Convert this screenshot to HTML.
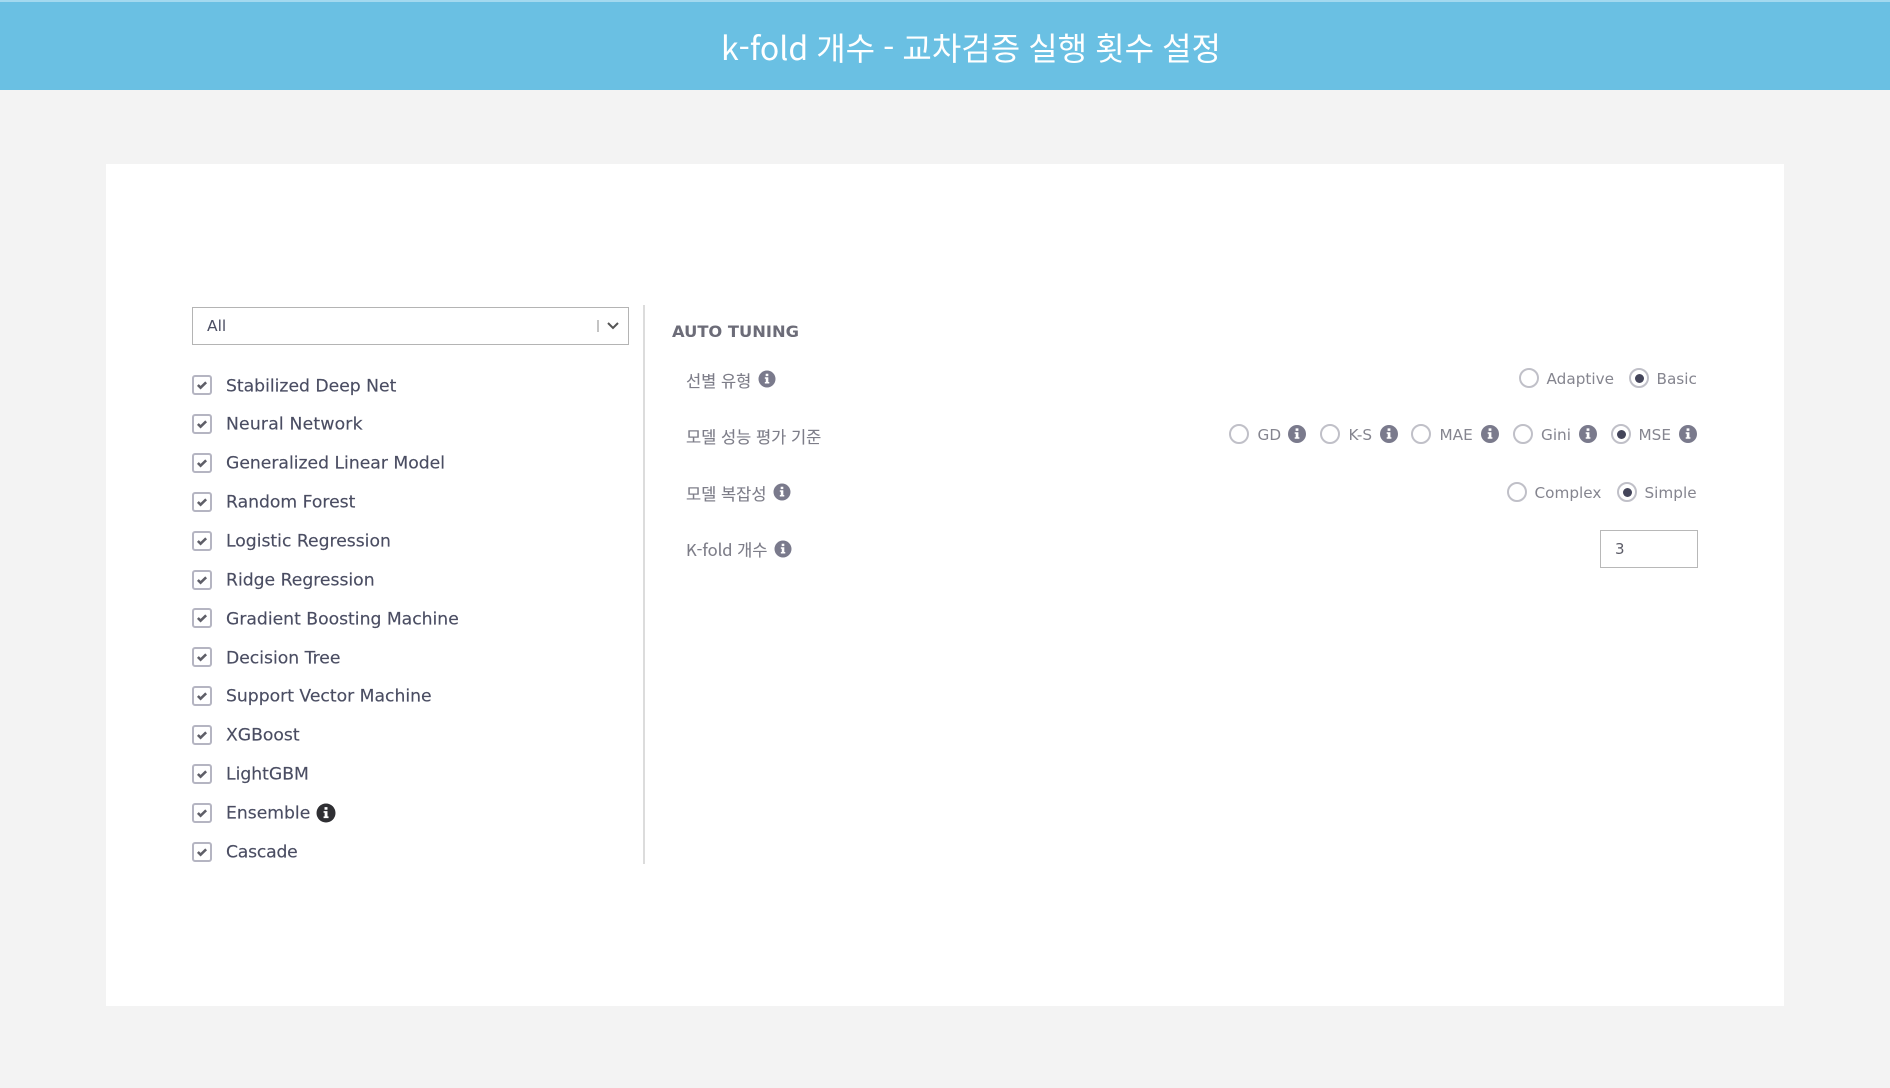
<!DOCTYPE html>
<html lang="ko">
<head>
<meta charset="utf-8">
<title>k-fold 개수</title>
<style>
html,body{margin:0;padding:0;width:1890px;height:1088px;overflow:hidden;background:#f3f3f3}
body{position:relative;font-family:"DejaVu Sans","Noto Sans CJK KR",sans-serif}
.hd{position:absolute;left:0;top:0;width:1890px;height:90px;background:#6ac0e3;border-top:2px solid #a3d9ef;box-sizing:border-box}
.title{position:absolute;left:0;top:47px;transform:translateY(-50%);text-align:center;color:#fff;font:400 32px/44px "Noto Sans CJK KR",sans-serif;white-space:nowrap;padding-left:81px;width:1780px;word-spacing:-.9px;filter:blur(.3px)}
.card{position:absolute;left:106px;top:164px;width:1678px;height:842px;background:#fff}
.sel{position:absolute;left:192px;top:307px;width:437px;height:38px;border:1.5px solid #b4b4b4;box-sizing:border-box}
.div{position:absolute;left:643px;top:305px;width:1.5px;height:559px;background:#dcdcdc}
.t{position:absolute;transform:translateY(-50%);white-space:nowrap;line-height:24px;filter:blur(.3px)}
.l{left:226px;font-size:17.2px;color:#4a4d62;transform:translateY(calc(-50% + .5px));-webkit-text-stroke:.15px #4a4d62}
.g{font-size:15.25px;color:#85858f}
.k{font-family:"Noto Sans CJK KR","DejaVu Sans",sans-serif;font-size:16.5px;color:#7d7d88;left:686px;-webkit-text-stroke:.1px #7d7d88}
.cb{position:absolute;left:192px;width:20px;height:20px;box-sizing:border-box;border:2.5px solid #b5b5c2;border-radius:3px;background:#fff;filter:blur(.3px)}
.cb svg{position:absolute;left:1.5px;top:1.5px}
.r{position:absolute;width:20px;height:20px;box-sizing:border-box;border:2px solid #c0c0c8;border-radius:50%;background:#fff;transform:translate(-50%,-50%);filter:blur(.3px)}
.r.on::after{content:"";position:absolute;left:3.5px;top:3.5px;width:9px;height:9px;border-radius:50%;background:#44455a}
.i{position:absolute;transform:translate(-50%,-50%);filter:blur(.3px)}
</style>
</head>
<body>
<svg width="0" height="0" style="position:absolute"><defs>
<symbol id="info" viewBox="0 0 18 18"><circle cx="9" cy="9" r="9" fill="currentColor"/><path d="M7.6 3.4h2.8v2.5H7.6zM6.7 7.2h3.7v5h1v1.6H6.7v-1.6h1v-3.4h-1z" fill="#fff"/></symbol>
<symbol id="chk" viewBox="0 0 16 16"><path d="M2.5 8l3.6 3.6L13.5 4.4" fill="none" stroke="#5f5f68" stroke-width="3.4"/></symbol>
</defs></svg>

<div class="hd"></div>
<div class="title">k-fold 개수 - 교차검증 실행 횟수 설정</div>
<div class="card"></div>

<div class="sel"></div>
<span class="t" style="left:207px;top:326px;font-size:15.5px;color:#4b4e63">All</span>
<div style="position:absolute;left:597px;top:320px;width:1.5px;height:12px;background:#c4c4c4"></div>
<svg style="position:absolute;left:606px;top:321px" width="14" height="10" viewBox="0 0 14 10"><path d="M2 2l5 5 5-5" fill="none" stroke="#555" stroke-width="2"/></svg>
<div class="div"></div>

<div class="cb" style="top:375px"><svg width="12" height="12"><use href="#chk"/></svg></div><span class="t l" style="top:385.5px">Stabilized Deep Net</span>
<div class="cb" style="top:414px"><svg width="12" height="12"><use href="#chk"/></svg></div><span class="t l" style="top:424px;letter-spacing:.2px">Neural Network</span>
<div class="cb" style="top:453px"><svg width="12" height="12"><use href="#chk"/></svg></div><span class="t l" style="top:463px">Generalized Linear Model</span>
<div class="cb" style="top:492px"><svg width="12" height="12"><use href="#chk"/></svg></div><span class="t l" style="top:502px">Random Forest</span>
<div class="cb" style="top:531px"><svg width="12" height="12"><use href="#chk"/></svg></div><span class="t l" style="top:541px">Logistic Regression</span>
<div class="cb" style="top:570px"><svg width="12" height="12"><use href="#chk"/></svg></div><span class="t l" style="top:580px">Ridge Regression</span>
<div class="cb" style="top:608px"><svg width="12" height="12"><use href="#chk"/></svg></div><span class="t l" style="top:618.5px">Gradient Boosting Machine</span>
<div class="cb" style="top:647px"><svg width="12" height="12"><use href="#chk"/></svg></div><span class="t l" style="top:657.5px">Decision Tree</span>
<div class="cb" style="top:686px"><svg width="12" height="12"><use href="#chk"/></svg></div><span class="t l" style="top:696px">Support Vector Machine</span>
<div class="cb" style="top:725px"><svg width="12" height="12"><use href="#chk"/></svg></div><span class="t l" style="top:735px">XGBoost</span>
<div class="cb" style="top:764px"><svg width="12" height="12"><use href="#chk"/></svg></div><span class="t l" style="top:774px">LightGBM</span>
<div class="cb" style="top:803px"><svg width="12" height="12"><use href="#chk"/></svg></div><span class="t l" style="top:813px">Ensemble</span>
<svg class="i" style="left:326px;top:813px;color:#2f2f33" width="19" height="19"><use href="#info"/></svg>
<div class="cb" style="top:842px"><svg width="12" height="12"><use href="#chk"/></svg></div><span class="t l" style="top:852px;letter-spacing:-.2px">Cascade</span>

<span class="t" style="left:672px;top:332px;font-size:16.3px;font-weight:700;color:#6c6c78">AUTO TUNING</span>

<span class="t k" style="top:379.5px">선별 유형</span>
<svg class="i" style="left:766.5px;top:379px;color:#7a7a8c" width="17" height="17"><use href="#info"/></svg>
<span class="t k" style="top:436px">모델 성능 평가 기준</span>
<span class="t k" style="top:492.5px">모델 복잡성</span>
<svg class="i" style="left:782px;top:492px;color:#7a7a8c" width="17" height="17"><use href="#info"/></svg>
<span class="t k" style="top:549px">K-fold 개수</span>
<svg class="i" style="left:783px;top:549px;color:#7a7a8c" width="17" height="17"><use href="#info"/></svg>

<div class="r" style="left:1529px;top:378px"></div><span class="t g" style="left:1546.5px;top:379px">Adaptive</span>
<div class="r on" style="left:1639px;top:378px"></div><span class="t g" style="left:1656.5px;top:379px">Basic</span>

<div class="r" style="left:1239px;top:434px"></div><span class="t g" style="left:1257.5px;top:435px">GD</span>
<svg class="i" style="left:1297px;top:434px;color:#7a7a8c" width="18" height="18"><use href="#info"/></svg>
<div class="r" style="left:1330px;top:434px"></div><span class="t g" style="left:1348.5px;top:435px">K-S</span>
<svg class="i" style="left:1389px;top:434px;color:#7a7a8c" width="18" height="18"><use href="#info"/></svg>
<div class="r" style="left:1421px;top:434px"></div><span class="t g" style="left:1439.5px;top:435px">MAE</span>
<svg class="i" style="left:1490px;top:434px;color:#7a7a8c" width="18" height="18"><use href="#info"/></svg>
<div class="r" style="left:1523px;top:434px"></div><span class="t g" style="left:1541px;top:435px">Gini</span>
<svg class="i" style="left:1588px;top:434px;color:#7a7a8c" width="18" height="18"><use href="#info"/></svg>
<div class="r on" style="left:1621px;top:434px"></div><span class="t g" style="left:1638.5px;top:435px">MSE</span>
<svg class="i" style="left:1688px;top:434px;color:#7a7a8c" width="18" height="18"><use href="#info"/></svg>

<div class="r" style="left:1517px;top:492px"></div><span class="t g" style="left:1534.5px;top:493px">Complex</span>
<div class="r on" style="left:1627px;top:492px"></div><span class="t g" style="left:1644.5px;top:493px">Simple</span>

<div style="position:absolute;left:1600px;top:530px;width:98px;height:38px;border:1.5px solid #b8b8b8;box-sizing:border-box;background:#fff"></div>
<span class="t" style="left:1615px;top:549px;font-size:15px;color:#5d5d68">3</span>
</body>
</html>
